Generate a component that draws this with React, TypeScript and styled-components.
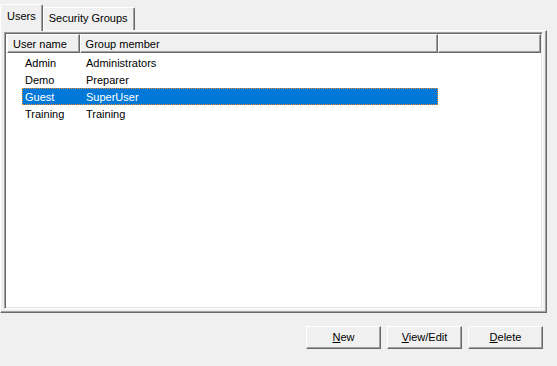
import styled, { createGlobalStyle } from 'styled-components';

const USERS = [
  { name: 'Admin', group: 'Administrators' },
  { name: 'Demo', group: 'Preparer' },
  { name: 'Guest', group: 'SuperUser' },
  { name: 'Training', group: 'Training' },
];

const GlobalStyle = createGlobalStyle`
  html, body {
    margin: 0;
    background: #f0f0f0;
    font-family: Tahoma, 'Liberation Sans', 'DejaVu Sans', sans-serif;
    font-size: 11px;
    color: #000;
  }
`;

export default function App() {
  return (
    <Window>
      <GlobalStyle />
      <TabStrip>
        <Tab active>Users</Tab>
        <Tab>Security Groups</Tab>
      </TabStrip>
      <Panel>
        <ListView>
          <Header>
            <HeaderCell width={73}>User name</HeaderCell>
            <HeaderCell width={360}>Group member</HeaderCell>
            <HeaderCell width={104} />
          </Header>
          <Rows>
            {USERS.map((u) => (
              <Row key={u.name} selected={u.name === 'Guest'}>
                <NameCell>{u.name}</NameCell>
                <GroupCell>{u.group}</GroupCell>
              </Row>
            ))}
          </Rows>
        </ListView>
      </Panel>
      <Buttons>
        <Button>
          <u>N</u>ew
        </Button>
        <Button>
          <u>V</u>iew/Edit
        </Button>
        <Button>
          <u>D</u>elete
        </Button>
      </Buttons>
    </Window>
  );
}

const Window = styled.div`
  width: 557px;
  height: 366px;
  display: flex;
  flex-direction: column;
`;

const TabStrip = styled.div`
  display: flex;
  align-items: flex-end;
  height: 30px;
  padding-left: 1px;
  position: relative;
  z-index: 1;
`;

const Tab = styled.div<{ active?: boolean }>`
  box-sizing: border-box;
  height: ${(p) => (p.active ? 27 : 23)}px;
  margin-bottom: ${(p) => (p.active ? -1 : 0)}px;
  margin-left: ${(p) => (p.active ? -1 : 0)}px;
  padding: ${(p) => (p.active ? '5px 6px 0 6px' : '4px 6px 0 5px')};
  background: #f0f0f0;
  border-top: 1px solid #ffffff;
  border-left: 1px solid #ffffff;
  border-right: 1px solid #696969;
  box-shadow: inset -1px 0 0 #a0a0a0;
  border-radius: 2px 2px 0 0;
  white-space: nowrap;
`;

const Panel = styled.div`
  box-sizing: border-box;
  width: 547px;
  height: 283px;
  border-top: 1px solid #ffffff;
  border-left: 1px solid #ffffff;
  border-right: 1px solid #696969;
  border-bottom: 1px solid #696969;
  box-shadow: inset -1px -1px 0 #a0a0a0;
  padding: 1px 3px 3px 3px;
`;

const ListView = styled.div`
  box-sizing: border-box;
  height: 100%;
  background: #ffffff;
  border-top: 1px solid #a0a0a0;
  border-left: 1px solid #a0a0a0;
  border-right: 1px solid #ffffff;
  border-bottom: 1px solid #ffffff;
  box-shadow: inset 1px 1px 0 #696969, inset -1px -1px 0 #e3e3e3;
  padding: 1px;
  display: flex;
  flex-direction: column;
`;

const Header = styled.div`
  display: flex;
  height: 19px;
  flex-shrink: 0;
  margin-left: 1px;
`;

const HeaderCell = styled.div<{ width: number }>`
  box-sizing: border-box;
  width: ${(p) => p.width}px;
  height: 19px;
  background: #f0f0f0;
  border-top: 1px solid #ffffff;
  border-left: 1px solid #ffffff;
  border-right: 1px solid #696969;
  border-bottom: 1px solid #696969;
  box-shadow: inset -1px -1px 0 #a0a0a0;
  padding: 3px 0 0 5px;
  white-space: nowrap;
`;

const Rows = styled.div`
  display: flex;
  flex-direction: column;
  padding-top: 1px;
`;

const Row = styled.div<{ selected?: boolean }>`
  box-sizing: border-box;
  display: flex;
  height: 17px;
  width: 416px;
  margin-left: 16px;
  align-items: center;
  background: ${(p) => (p.selected ? '#0078d7' : 'transparent')};
  color: ${(p) => (p.selected ? '#ffffff' : '#000000')};
  border: 1px ${(p) => (p.selected ? 'dotted #f08a24' : 'solid transparent')};
`;

const NameCell = styled.div`
  width: 59px;
  padding-left: 2px;
  white-space: nowrap;
`;

const GroupCell = styled.div`
  padding-left: 2px;
  white-space: nowrap;
`;

const Buttons = styled.div`
  display: flex;
  justify-content: flex-end;
  gap: 6px;
  padding: 13px 14px 0 0;
`;

const Button = styled.button`
  box-sizing: border-box;
  width: 75px;
  height: 23px;
  font: inherit;
  color: #000;
  background: #f0f0f0;
  border-top: 1px solid #ffffff;
  border-left: 1px solid #ffffff;
  border-right: 1px solid #696969;
  border-bottom: 1px solid #696969;
  box-shadow: inset -1px -1px 0 #a0a0a0;
  padding: 0 0 1px 0;
  u {
    text-decoration: underline;
  }
`;
